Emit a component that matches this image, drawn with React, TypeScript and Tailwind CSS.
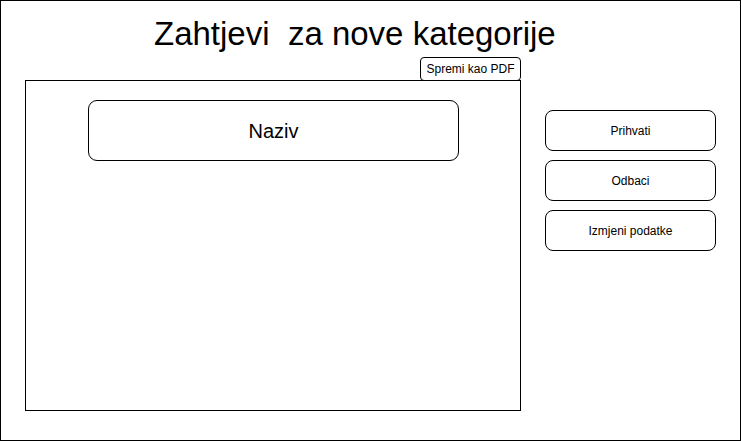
export default function App() {
  return (
    <div
      className="w-[741px] h-[441px] border border-black bg-white text-black"
      style={{ fontFamily: '"Liberation Sans", Arial, sans-serif' }}
    >
      <h1 className="pl-[153px] pt-[14px] h-[56px] text-[33px] leading-[38px] whitespace-pre">
        {"Zahtjevi  za nove kategorije"}
      </h1>
      <div className="flex pl-[24px]">
        <div className="w-[496px] flex flex-col">
          <div className="flex justify-end">
            <button className="-mb-px h-[24px] w-[101px] rounded-[4px] border border-black bg-white text-[12px] leading-none">
              Spremi kao PDF
            </button>
          </div>
          <div className="h-[331px] border border-black pt-[19px] pl-[62px]">
            <div className="flex h-[61px] w-[371px] items-center justify-center rounded-[9px] border border-black text-[20px]">
              Naziv
            </div>
          </div>
        </div>
        <div className="ml-[24px] mt-[53px] flex flex-col gap-[9px]">
          {["Prihvati", "Odbaci", "Izmjeni podatke"].map((label) => (
            <button
              key={label}
              className="flex h-[41px] w-[171px] items-center justify-center rounded-[8px] border border-black bg-white text-[12px]"
            >
              {label}
            </button>
          ))}
        </div>
      </div>
    </div>
  );
}
